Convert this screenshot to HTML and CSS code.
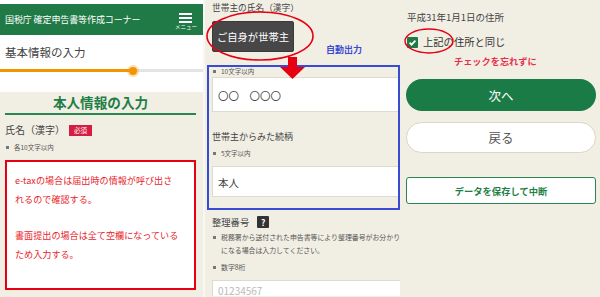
FILE: index.html
```html
<!DOCTYPE html>
<html lang="ja">
    <head>
        <meta charset="UTF-8" />
        <meta name="viewport" content="width=device-width, initial-scale=1.0" />
        <title>基本情報の入力</title>
        <link rel="stylesheet" href="styles.css">
    </head>
    <body>
        <!-- 左: 本人情報 -->
        <div class="pane pane-left">
            <div class="topbar">
                <span class="site">国税庁 確定申告書等作成コーナー</span>
                <span class="menu">
                    <span class="bars"><i></i><i></i><i></i></span>
                    <span class="menu-label">メニュー</span>
                </span>
            </div>
            <div class="step-title">基本情報の入力</div>
            <div class="progress">
                <div class="progress-done"><span class="progress-dot"></span></div>
            </div>
            <div class="section">
                <h2 class="section-title">本人情報の入力</h2>
                <div class="field-label">氏名（漢字）<span class="required">必須</span></div>
                <ul class="notes"><li>各10文字以内</li></ul>
                <div class="memo">
                    <p>e-taxの場合は届出時の情報が呼び出さ<br>れるので確認する。</p>
                    <p>書面提出の場合は全て空欄になっている<br>ため入力する。</p>
                </div>
            </div>
        </div>

        <!-- 中: 世帯主 -->
        <div class="pane pane-mid">
            <div class="field-label small">世帯主の氏名（漢字）</div>
            <button class="btn-dark">ご自身が世帯主</button>
            <div class="auto-box">
                <ul class="notes"><li>10文字以内</li></ul>
                <div class="input">〇〇　〇〇〇</div>
                <div class="field-label small gap">世帯主からみた続柄</div>
                <ul class="notes"><li>5文字以内</li></ul>
                <div class="input short">本人</div>
            </div>
            <div class="field-label small row">整理番号<span class="help">?</span></div>
            <ul class="notes"><li>税務署から送付された申告書等により整理番号がお分かり<br>になる場合は入力してください。</li></ul>
            <ul class="notes"><li>数字8桁</li></ul>
            <div class="input placeholder">01234567</div>
        </div>

        <!-- 右: 住所とボタン -->
        <div class="pane pane-right">
            <div class="field-label small">平成31年1月1日の住所</div>
            <label class="check-row">
                <span class="checkbox">
                    <svg width="11" height="11" viewBox="0 0 11 11"><path d="M2.6 5.6 L4.6 7.6 L8.4 3.6" fill="none" stroke="#fff" stroke-width="1.8"/></svg>
                </span>
                上記の住所と同じ
            </label>
            <div class="reminder">チェックを忘れずに</div>
            <button class="btn btn-next">次へ</button>
            <button class="btn btn-back">戻る</button>
            <button class="btn btn-save">データを保存して中断</button>
        </div>

        <!-- 注釈 -->
        <svg class="marks" width="600" height="297" viewBox="0 0 600 297">
            <ellipse cx="260" cy="36" rx="53" ry="24" fill="none" stroke="#e60012" stroke-width="1.6"/>
            <ellipse cx="429" cy="41" rx="24" ry="12" fill="none" stroke="#e60012" stroke-width="1.4"/>
            <polygon points="288,57 297,57 297,67 305,67 292.5,79 280,67 288,67" fill="#e60012"/>
        </svg>
        <span class="auto-label">自動出力</span>
    </body>
</html>
```

FILE: styles.css
```css
* {
    margin: 0;
    padding: 0;
    box-sizing: border-box;
}

body {
    position: relative;
    display: flex;
    width: 600px;
    height: 297px;
    overflow: hidden;
    background-color: #f8f7f3;
    font-family: "Noto Sans CJK JP", "Noto Sans", sans-serif;
    color: #444;
}

.pane {
    height: 297px;
    overflow: hidden;
    background-color: #f1eee4;
}

/* 左 */
.pane-left {
    width: 203px;
    padding-top: 4px;
    background-color: #fff;
}

.topbar {
    height: 31px;
    display: flex;
    align-items: center;
    justify-content: space-between;
    padding: 0 6px 0 5px;
    background-color: #1f7a46;
    color: #fff;
}

.site {
    font-size: 9px;
    letter-spacing: -0.1px;
}

.menu {
    display: flex;
    flex-direction: column;
    align-items: center;
    padding-top: 6px;
}

.bars {
    display: flex;
    flex-direction: column;
    gap: 2px;
    width: 13px;
}

.bars i {
    display: block;
    height: 2px;
    background-color: #fff;
}

.menu-label {
    font-size: 5.5px;
    line-height: 9px;
}

.step-title {
    height: 34px;
    line-height: 34px;
    padding-left: 5px;
    font-size: 11.5px;
    color: #444;
}

.progress {
    height: 3px;
    background-color: #e4e4e4;
}

.progress-done {
    position: relative;
    width: 133px;
    height: 3px;
    background-color: #f29600;
}

.progress-dot {
    position: absolute;
    right: -4px;
    top: -2.5px;
    width: 8px;
    height: 8px;
    border-radius: 50%;
    background-color: #f29600;
    box-shadow: 0 0 0 2px rgba(242, 150, 0, 0.3);
}

.section {
    height: 223px;
    padding: 0 7px 0 5px;
    background-color: #f1eee4;
}

.section-title {
    margin-top: 20px;
    line-height: 21px;
    font-size: 13.6px;
    font-weight: bold;
    text-align: center;
    color: #1f7f47;
    border-bottom: 2px solid #2b8550;
}

.field-label {
    display: flex;
    align-items: center;
    margin-top: 8px;
    line-height: 14px;
    font-size: 10px;
    color: #444;
}

.required {
    margin-left: 4px;
    width: 23px;
    height: 11px;
    line-height: 11px;
    text-align: center;
    font-size: 6.5px;
    color: #fff;
    background-color: #d61d41;
}

.notes {
    list-style: none;
    margin-top: 5px;
    font-size: 6.5px;
    line-height: 10px;
    color: #555;
}

.notes li {
    position: relative;
    padding-left: 9px;
}

.notes li::before {
    content: "";
    position: absolute;
    left: 1px;
    top: 3.5px;
    width: 3px;
    height: 3px;
    background-color: #777;
}

.memo {
    height: 130px;
    margin-top: 8px;
    padding: 9px 0 0 8px;
    border: 2px solid #e60012;
    background-color: #fff;
    color: #e8242b;
    font-size: 9.1px;
    line-height: 19px;
    white-space: nowrap;
}

.memo p + p {
    margin-top: 17px;
}

/* 中 */
.pane-mid {
    width: 195px;
    margin-left: 2px;
    padding: 2px 0 0 7px;
}

.field-label.small {
    margin-top: 0;
    font-size: 8.7px;
    line-height: 12px;
}

.btn-dark {
    display: block;
    width: 82px;
    height: 31px;
    margin-top: 7px;
    font-family: inherit;
    font-size: 10.3px;
    color: #fff;
    background-color: #474747;
    border: 1px solid #3a3a3a;
    border-radius: 2px;
}

.auto-box {
    margin: 13px 0 0 -5px;
    padding: 0 0 11px 3px;
    border: 2px solid #3a4bd3;
}

.auto-box .notes {
    margin-top: 0;
    line-height: 8px;
}

.auto-box .notes li::before {
    top: 2.5px;
}

.input {
    height: 35px;
    margin-top: 2px;
    padding-left: 5px;
    line-height: 35px;
    font-size: 10.5px;
    color: #444;
    background-color: #fff;
    border: 1px solid #dedace;
    border-right: none;
}

.input.short {
    height: 31px;
    line-height: 31px;
    margin-top: 8px;
}

.field-label.small.gap {
    margin-top: 18px;
    font-size: 9px;
    line-height: 13px;
}

.auto-box .field-label + .notes {
    margin-top: 5px;
    line-height: 10px;
}

.auto-box .field-label + .notes li::before {
    top: 3.5px;
}

.field-label.small.row {
    margin-top: 5px;
    font-size: 9.3px;
    line-height: 14px;
}

.help {
    margin-left: 8px;
    width: 12px;
    height: 12px;
    line-height: 12px;
    text-align: center;
    font-size: 8.5px;
    font-weight: bold;
    color: #fff;
    background-color: #333;
    border-radius: 1px;
}

.pane-mid > .notes {
    margin-top: 2px;
    font-size: 6.9px;
    line-height: 13px;
    white-space: nowrap;
}

.pane-mid > .notes li::before {
    top: 5px;
}

.pane-mid > .notes + .notes {
    margin-top: 4px;
}

/* 画面下で切れる入力欄 */
.input.placeholder {
    height: 16px;
    margin-top: 6px;
    padding-top: 3px;
    line-height: 13px;
    color: #bbb;
    font-size: 10px;
    border-bottom: none;
}

/* 右 */
.pane-right {
    width: 200px;
    padding: 10px 4px 0 6px;
}

.pane-right .field-label.small {
    margin-left: 1px;
    font-size: 9.5px;
    line-height: 14px;
}

.check-row {
    display: flex;
    align-items: center;
    gap: 5px;
    margin: 11px 0 0 1px;
    line-height: 14px;
    font-size: 10.3px;
    color: #333;
}

.checkbox {
    display: flex;
    width: 11px;
    height: 11px;
    background-color: #1f7a46;
    border-radius: 1px;
}

.reminder {
    margin-top: 6px;
    padding-left: 48px;
    line-height: 13px;
    font-size: 9.2px;
    font-weight: bold;
    color: #e8304a;
}

.btn {
    display: block;
    width: 190px;
    font-family: inherit;
    text-align: center;
}

.btn-next {
    height: 32px;
    margin-top: 11px;
    font-size: 12.5px;
    color: #fff;
    background-color: #1b7b46;
    border: none;
    border-radius: 16px;
}

.btn-back {
    height: 31px;
    margin-top: 11px;
    font-size: 12.5px;
    color: #555;
    background-color: #fff;
    border: 1px solid #dcd6c4;
    border-radius: 16px;
}

.btn-save {
    height: 27px;
    margin-top: 24px;
    font-size: 9.3px;
    font-weight: bold;
    color: #1f7f47;
    background-color: #fff;
    border: 1.5px solid #2b8550;
    border-radius: 3px;
}

/* 注釈 */
.marks {
    position: absolute;
    left: 0;
    top: 0;
    pointer-events: none;
}

.auto-label {
    position: absolute;
    left: 326px;
    top: 43px;
    font-size: 9px;
    line-height: 14px;
    font-weight: bold;
    color: #3a4bd3;
}
```
